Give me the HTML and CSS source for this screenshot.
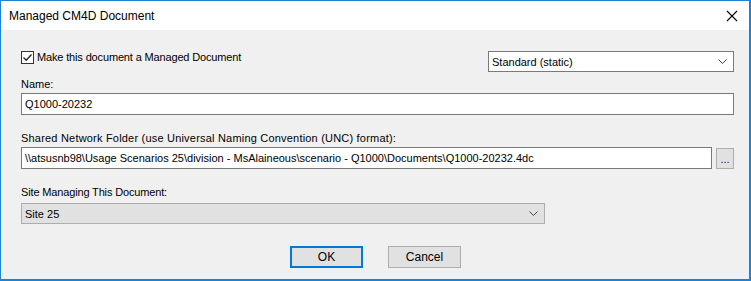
FILE: index.html
```html
<!DOCTYPE html>
<html>
<head>
<meta charset="utf-8">
<link rel="stylesheet" href="styles.css">
</head>
<body>
<div class="window">
  <div class="titlebar">
    <span class="title">Managed CM4D Document</span>
    <svg class="close" width="12" height="12" viewBox="0 0 12 12"><path d="M1 1 L11 11 M11 1 L1 11" stroke="#000" stroke-width="1.1" fill="none"/></svg>
  </div>
  <div class="content">
    <div class="row-top">
      <label class="check">
        <span class="box"><svg width="11" height="11" viewBox="0 0 11 11"><path d="M1.5 5.5 L4.2 8.2 L9.5 2.5" stroke="#222" stroke-width="1.3" fill="none"/></svg></span>
        <span class="tight">Make this document a Managed Document</span>
      </label>
      <div class="combo combo-white">
        <span>Standard (static)</span>
        <svg class="chev" width="9" height="6" viewBox="0 0 9 6"><path d="M0.5 0.5 L4.5 4.5 L8.5 0.5" stroke="#444" stroke-width="1" fill="none"/></svg>
      </div>
    </div>
    <div class="lbl lbl-name">Name:</div>
    <div class="textbox">Q1000-20232</div>
    <div class="lbl lbl-shared">Shared Network Folder (use Universal Naming Convention (UNC) format):</div>
    <div class="path-row">
      <div class="textbox grow">\\atsusnb98\Usage Scenarios 25\division - MsAlaineous\scenario - Q1000\Documents\Q1000-20232.4dc</div>
      <div class="dots">...</div>
    </div>
    <div class="lbl lbl-site tight">Site Managing This Document:</div>
    <div class="combo combo-gray">
      <span>Site 25</span>
      <svg class="chev" width="9" height="6" viewBox="0 0 9 6"><path d="M0.5 0.5 L4.5 4.5 L8.5 0.5" stroke="#444" stroke-width="1" fill="none"/></svg>
    </div>
    <div class="buttons">
      <div class="btn btn-ok">OK</div>
      <div class="btn">Cancel</div>
    </div>
  </div>
</div>
</body>
</html>
```
FILE: styles.css
```css
html, body {
  margin: 0;
  padding: 0;
  background: #f0f0f0;
}
.window {
  width: 751px;
  height: 281px;
  box-sizing: border-box;
  border-left: 1px solid #1883d7;
  border-top: 1px solid #1883d7;
  border-right: 2px solid #1883d7;
  border-bottom: 2px solid #1883d7;
  background: #f0f0f0;
  font-family: "Liberation Sans", Arial, sans-serif;
  font-size: 11px;
  color: #000;
  display: flex;
  flex-direction: column;
}
.titlebar {
  height: 29px;
  background: #fff;
  display: flex;
  align-items: center;
  justify-content: space-between;
  padding: 0 10px 0 8px;
  flex-shrink: 0;
}
.title {
  font-size: 12px;
  padding-top: 1px;
}
.close {
  margin-right: 1px;
}
.content {
  padding: 0 15px 0 20px;
  display: flex;
  flex-direction: column;
}
.row-top {
  display: flex;
  justify-content: space-between;
  align-items: flex-start;
  margin-top: 21px;
}
.check {
  display: flex;
  align-items: center;
  gap: 3px;
  line-height: 13px;
}
.tight {
  letter-spacing: -0.15px;
}
.box {
  width: 11px;
  height: 11px;
  border: 1px solid #333;
  background: #fff;
  display: flex;
}
.combo {
  display: flex;
  align-items: center;
  justify-content: space-between;
  box-sizing: border-box;
  padding: 0 6px 0 3px;
}
.combo-white {
  width: 246px;
  height: 21px;
  border: 1px solid #7a7a7a;
  background: #fff;
}
.combo-gray {
  width: 524px;
  height: 21px;
  border: 1px solid #adadad;
  background: #e1e1e1;
  margin-top: 4px;
}
.lbl {
  line-height: 13px;
}
.lbl-name {
  margin-top: 6px;
}
.lbl-shared {
  margin-top: 17px;
  letter-spacing: 0.2px;
}
.lbl-site {
  margin-top: 17px;
}
.textbox {
  box-sizing: border-box;
  height: 22px;
  border: 1px solid #7a7a7a;
  background: #fff;
  padding: 0 3px;
  display: flex;
  align-items: center;
  white-space: nowrap;
  margin-top: 2px;
}
.path-row {
  display: flex;
  gap: 4px;
  margin-top: 2px;
}
.path-row .textbox {
  margin-top: 0;
}
.grow {
  flex: 1;
}
.dots {
  box-sizing: border-box;
  width: 18px;
  height: 21px;
  margin-top: 1px;
  border: 1px solid #adadad;
  background: #e1e1e1;
  display: flex;
  align-items: flex-end;
  justify-content: center;
  line-height: 14px;
  padding-bottom: 2px;
  color: #300060;
}
.buttons {
  display: flex;
  justify-content: center;
  gap: 25px;
  margin-top: 22px;
  padding-right: 4px;
}
.btn {
  box-sizing: border-box;
  width: 73px;
  height: 22px;
  border: 1px solid #adadad;
  background: #e1e1e1;
  display: flex;
  align-items: center;
  justify-content: center;
  font-size: 12px;
}
.btn-ok {
  border: 2px solid #0078d7;
}
```
